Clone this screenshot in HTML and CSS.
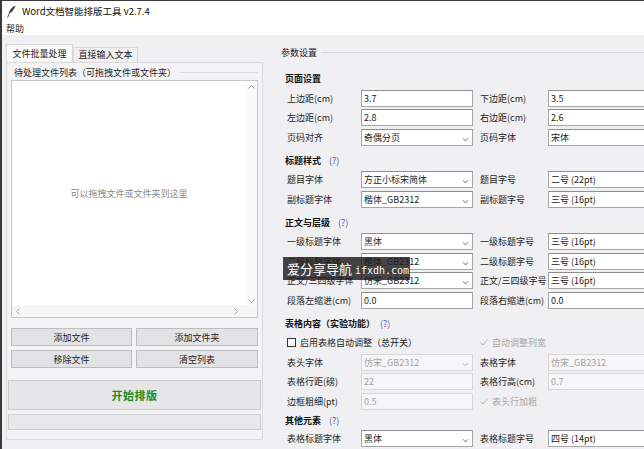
FILE: index.html
```html
<!doctype html>
<html>
<head>
	<meta charset="utf-8">
	<title>Word文档智能排版工具</title>
	<link rel="stylesheet" href="styles.css">
</head>
<body>
<div class="win">
	<div class="titlebar">
		<svg class="quill" width="9" height="13" viewBox="0 0 9 13">
			<path d="M8.6 0.4 C5.5 1.2 2.6 4 1.6 8.2 L2.6 8.6 C4.6 7.4 7.4 4.4 8.6 0.4 Z" fill="#4a4a4a"/>
			<path d="M2.2 8.4 L0.6 12.6" stroke="#4a4a4a" stroke-width="1"/>
		</svg>
		<span>Word文档智能排版工具 v2.7.4</span>
	</div>
	<div class="menubar"><span>帮助</span></div>

	<div class="main">
		<!-- 左侧: 文件列表 -->
		<div class="left">
			<div class="tabs">
				<div class="tab on">文件批量处理</div>
				<div class="tab">直接输入文本</div>
			</div>
			<div class="pane">
				<div class="lf-title"><span>待处理文件列表（可拖拽文件或文件夹）</span></div>
				<div class="listbox">
					<div class="list-area">可以拖拽文件或文件夹到这里</div>
					<div class="vscroll">
						<svg width="7" height="4" viewBox="0 0 7 4"><path d="M0.5 3.5 L3.5 0.5 L6.5 3.5" fill="none" stroke="#a8a8a8"/></svg>
						<svg width="7" height="4" viewBox="0 0 7 4"><path d="M0.5 0.5 L3.5 3.5 L6.5 0.5" fill="none" stroke="#a8a8a8"/></svg>
					</div>
					<div class="hscroll">
						<svg width="4" height="7" viewBox="0 0 4 7"><path d="M3.5 0.5 L0.5 3.5 L3.5 6.5" fill="none" stroke="#a8a8a8"/></svg>
						<svg width="4" height="7" viewBox="0 0 4 7"><path d="M0.5 0.5 L3.5 3.5 L0.5 6.5" fill="none" stroke="#a8a8a8"/></svg>
					</div>
					<div class="corner"></div>
				</div>
				<div class="btns">
					<button class="btn">添加文件</button>
					<button class="btn">添加文件夹</button>
					<button class="btn">移除文件</button>
					<button class="btn">清空列表</button>
				</div>
				<button class="start">开始排版</button>
				<div class="progress"></div>
			</div>
		</div>

		<!-- 右侧: 参数设置 -->
		<div class="right">
			<div class="legend"><span>参数设置</span></div>

			<div class="sec-head first">页面设置</div>
			<div class="grid">
				<div class="lbl">上边距(cm)</div><div class="ent">3.7</div>
				<div class="lbl lbl2">下边距(cm)</div><div class="ent">3.5</div>
				<div class="lbl">左边距(cm)</div><div class="ent">2.8</div>
				<div class="lbl lbl2">右边距(cm)</div><div class="ent">2.6</div>
				<div class="lbl">页码对齐</div><div class="ent combo">奇偶分页<i class="chev"></i></div>
				<div class="lbl lbl2">页码字体</div><div class="ent">宋体</div>
			</div>

			<div class="sec-head">标题样式 <em>(?)</em></div>
			<div class="grid">
				<div class="lbl">题目字体</div><div class="ent combo">方正小标宋简体<i class="chev"></i></div>
				<div class="lbl lbl2">题目字号</div><div class="ent">二号 (22pt)</div>
				<div class="lbl">副标题字体</div><div class="ent combo">楷体_GB2312<i class="chev"></i></div>
				<div class="lbl lbl2">副标题字号</div><div class="ent">三号 (16pt)</div>
			</div>

			<div class="sec-head">正文与层级 <em>(?)</em></div>
			<div class="grid">
				<div class="lbl">一级标题字体</div><div class="ent combo">黑体<i class="chev"></i></div>
				<div class="lbl lbl2">一级标题字号</div><div class="ent">三号 (16pt)</div>
				<div class="lbl">二级标题字体</div><div class="ent combo">楷体_GB2312<i class="chev"></i></div>
				<div class="lbl lbl2">二级标题字号</div><div class="ent">三号 (16pt)</div>
				<div class="lbl">正文/三四级字体</div><div class="ent combo">仿宋_GB2312<i class="chev"></i></div>
				<div class="lbl lbl2">正文/三四级字号</div><div class="ent">三号 (16pt)</div>
				<div class="lbl">段落左缩进(cm)</div><div class="ent">0.0</div>
				<div class="lbl lbl2">段落右缩进(cm)</div><div class="ent">0.0</div>
			</div>

			<div class="sec-head">表格内容（实验功能） <em class="far">(?)</em></div>
			<div class="grid">
				<div class="chk-row">
					<span class="chk"></span><span>启用表格自动调整（总开关）</span>
				</div>
				<div class="chk-row off lbl2">
					<svg class="tick" width="8" height="7" viewBox="0 0 8 7"><path d="M0.5 3.5 L3 6 L7.5 0.5" fill="none" stroke="#b4b4b4"/></svg><span>自动调整列宽</span>
				</div>
				<div class="lbl">表头字体</div><div class="ent combo dis">仿宋_GB2312<i class="chev"></i></div>
				<div class="lbl lbl2">表格字体</div><div class="ent dis">仿宋_GB2312</div>
				<div class="lbl">表格行距(磅)</div><div class="ent dis">22</div>
				<div class="lbl lbl2">表格行高(cm)</div><div class="ent dis">0.7</div>
				<div class="lbl">边框粗细(pt)</div><div class="ent dis">0.5</div>
				<div class="chk-row off lbl2">
					<svg class="tick" width="8" height="7" viewBox="0 0 8 7"><path d="M0.5 3.5 L3 6 L7.5 0.5" fill="none" stroke="#b4b4b4"/></svg><span>表头行加粗</span>
				</div>
			</div>

			<div class="sec-head tight">其他元素 <em>(?)</em></div>
			<div class="grid">
				<div class="lbl">表格标题字体</div><div class="ent combo">黑体<i class="chev"></i></div>
				<div class="lbl lbl2">表格标题字号</div><div class="ent">四号 (14pt)</div>
			</div>
		</div>
	</div>

	<div class="watermark">爱分享导航 <span>ifxdh.com</span></div>
</div>
</body>
</html>
```
FILE: styles.css
```css
*{box-sizing:border-box;}
body{margin:0;font-family:"Noto Sans CJK SC","Microsoft YaHei",sans-serif;font-size:9px;color:#1e1e1e;}
.win{width:644px;height:449px;position:relative;overflow:hidden;background:#f0eff1;
	border-top:1px solid #3a3a3a;border-left:2px solid #3a3a3a;}

/* 标题栏 + 菜单 */
.titlebar{height:20px;background:#fffffd;display:flex;align-items:center;padding-left:5px;gap:6px;font-size:9.5px;color:#111;}
.quill{display:block;}
.menubar{height:14px;background:#fffffd;padding:2px 0 0 4px;line-height:12px;}

.main{display:flex;height:414px;}

/* 左侧 */
.left{width:264px;padding:9px 0 0 4px;}
.tabs{display:flex;align-items:flex-end;height:18px;}
.tab{height:15px;width:65px;border:1px solid #d9d9d9;border-bottom:none;background:#f0f0f0;text-align:center;line-height:14px;}
.tab.on{height:18px;width:67px;background:#fbfbfb;line-height:17px;}
.pane{width:257px;height:378px;border:1px solid #dadada;padding:3px 1px 0;background:#f3f2f4;}
.lf-title{display:flex;align-items:center;height:12px;margin:0 3px 0 6px;}
.lf-title::after{content:"";flex:1;border-top:1px solid #dcdcdc;margin-left:4px;}
.listbox{margin:2px 3px 0;height:238px;border:1px solid #c8c8c8;background:#fff;
	display:grid;grid-template-columns:1fr 11px;grid-template-rows:1fr 12px;}
.list-area{display:flex;align-items:center;justify-content:center;color:#8a8a8a;}
.vscroll{display:flex;flex-direction:column;justify-content:space-between;align-items:center;padding:4px 0 2px;background:#fafafa;}
.hscroll{display:flex;justify-content:space-between;align-items:center;padding:0 8px 0 4px;background:#f7f7f7;}
.corner{background:#f7f7f7;}
.btns{display:grid;grid-template-columns:121px 122px;gap:4px;margin:10px 3px 0;}
.btn{height:18px;font:inherit;color:#1e1e1e;background:#e3e2e4;border:1px solid #bdbdbd;padding:0;}
.start{display:block;width:100%;height:30px;margin-top:12px;font-family:inherit;font-size:11px;font-weight:bold;
	color:#1a8a1a;background:#e6e5e7;border:1px solid #cbcbcb;padding:0;letter-spacing:0.5px;}
.progress{height:16px;margin-top:4px;background:#e8e7e9;border:1px solid #cdcdcd;}

/* 右侧参数 */
.right{flex:1;padding-left:11px;overflow:hidden;}
.legend{display:flex;align-items:center;height:12px;margin-top:11px;padding-left:4px;}
.legend::after{content:"";flex:1;border-top:1px solid #d9d9d9;margin-left:4px;}
.sec-head{height:25.5px;padding:9px 0 0 8px;line-height:12px;font-weight:bold;color:#111;white-space:nowrap;}
.sec-head.first{margin-top:6px;}
.sec-head.tight{height:20.5px;padding-top:5px;}
.sec-head em{font-style:normal;font-weight:normal;color:#5050cc;margin-left:6px;}
.sec-head em.far{margin-left:3px;}
.grid{display:grid;grid-template-columns:74px 112px 75px 112px;grid-auto-rows:17px;row-gap:2.5px;margin-left:10px;width:400px;}
.lbl{line-height:17px;white-space:nowrap;}
.lbl2{padding-left:7px;}
.ent{position:relative;height:17px;background:#fff;border:1px solid #a6a6a6;border-top-color:#8f8f8f;padding-left:2px;line-height:15px;white-space:nowrap;color:#222;}
.ent.dis{background:#f6f5f7;border-color:#d6d6d6;color:#a4a4a4;}
.chev{position:absolute;right:4px;top:6px;width:5px;height:5px;border-right:1px solid #777;border-bottom:1px solid #777;transform:rotate(45deg) scale(0.8);}
.dis .chev{border-color:#b8b8b8;}
.chk-row{display:flex;align-items:center;gap:4px;grid-column:span 2;white-space:nowrap;}
.chk-row.off{color:#a6a6a6;}
.chk{width:9px;height:9px;border:1px solid #333;background:#fff;}

.watermark{position:absolute;left:281px;top:256px;width:127px;height:23px;background:rgba(28,28,28,0.82);color:#fff;
	font-size:13px;line-height:23px;padding-left:4px;white-space:nowrap;}
.watermark span{font-family:"DejaVu Sans Mono",monospace;font-size:10px;}
```
